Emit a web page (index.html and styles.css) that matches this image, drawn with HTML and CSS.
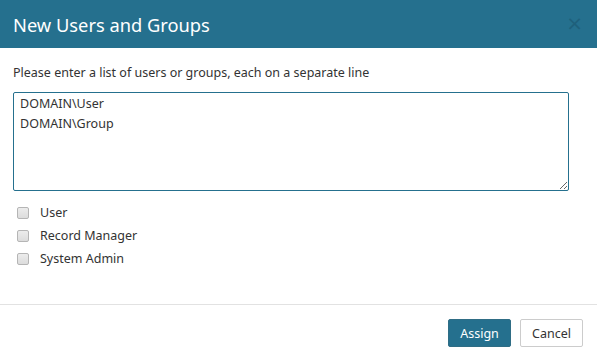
FILE: index.html
```html
<!DOCTYPE html>
<html lang="en">
<head>
  <meta charset="UTF-8" />
  <title>New Users and Groups</title>
  <link rel="stylesheet" href="styles.css">
</head>
<body>
  <div class="modal">
    <header class="modal-header">
      <h1>New Users and Groups</h1>
      <button class="close" type="button">&times;</button>
    </header>
    <div class="modal-body">
      <label class="hint" for="names">Please enter a list of users or groups, each on a separate line</label>
      <textarea id="names" class="names">DOMAIN\User
DOMAIN\Group</textarea>
      <div class="roles">
        <label class="role"><input type="checkbox"> User</label>
        <label class="role"><input type="checkbox"> Record Manager</label>
        <label class="role"><input type="checkbox"> System Admin</label>
      </div>
    </div>
    <footer class="modal-footer">
      <button class="btn primary" type="button">Assign</button>
      <button class="btn" type="button">Cancel</button>
    </footer>
  </div>
</body>
</html>
```
FILE: styles.css
```css
* { margin: 0; padding: 0; box-sizing: border-box; }
body {
  background: #fff;
  font-family: 'Noto Sans', 'Open Sans', sans-serif;
  font-size: 12.5px;
  color: #333;
}
.modal { display: flex; flex-direction: column; height: 361px; }

.modal-header {
  height: 48px;
  background: #25708e;
  display: flex; align-items: center; justify-content: space-between;
  padding: 0 14px 0 13px;
}
.modal-header h1 { font-size: 18.3px; font-weight: 400; color: #fff; }
.close {
  background: none; border: none;
  color: #1b5670; font-size: 20px; line-height: 1;
  font-family: 'DejaVu Sans', sans-serif; opacity: 0.6;
  margin-top: -2px;
}

.modal-body { flex: 1; padding: 16px 28px 0 13px; display: flex; flex-direction: column; }
.hint { display: block; line-height: 18px; margin-bottom: 10px; }
.names {
  width: 556px; height: 99px;
  border: 1px solid #25708e;
  border-radius: 2px;
  padding: 1px 6px;
  font-family: inherit; font-size: 12.5px; line-height: 20px;
  color: #333; outline: none;
}

.roles { margin-top: 10px; padding-left: 4px; display: flex; flex-direction: column; }
.role { display: flex; align-items: center; gap: 11px; height: 23px; }
.role input {
  appearance: none;
  width: 12px; height: 12px; margin: 0;
  border: 1px solid #b5b5b5; border-radius: 2px;
  background: linear-gradient(#ececec, #dcdcdc);
}

.modal-footer {
  border-top: 1px solid #e2e2e2;
  display: flex; justify-content: flex-end; gap: 9px;
  padding: 14px 14px 14px 0;
}
.btn {
  height: 28px; min-width: 63px;
  padding: 0 10px;
  border: 1px solid #ccc; border-radius: 2px;
  background: #fff; color: #333;
  font-family: inherit; font-size: 12.5px;
}
.btn.primary { background: #25708e; border-color: #2f6d85; color: #fff; }
```
